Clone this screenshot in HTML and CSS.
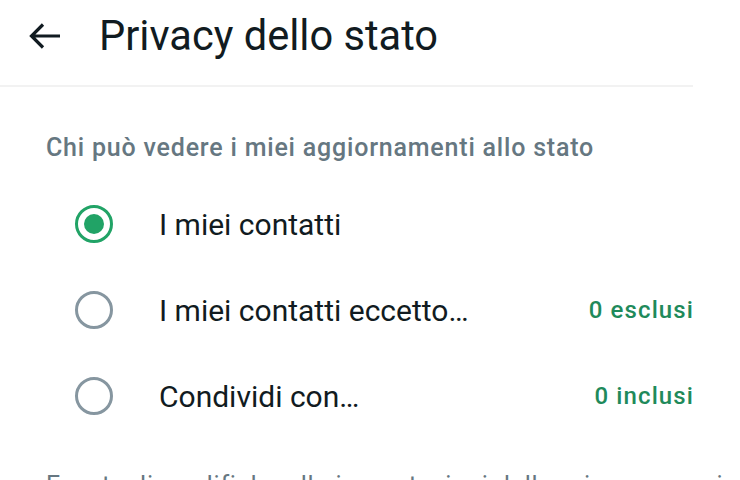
FILE: index.html
```html
<!DOCTYPE html>
<html lang="it">
<head>
<meta charset="utf-8">
<link rel="stylesheet" href="styles.css">
</head>
<body>
<div class="screen">
  <header class="appbar">
    <span class="back">
      <svg width="34" height="28" viewBox="0 0 34 28"><path d="M32 14H4M15 2.5L3.5 14L15 25.5" fill="none" stroke="#111b21" stroke-width="3.2" stroke-linecap="butt" stroke-linejoin="miter"/></svg>
    </span>
    <h1 class="title">Privacy dello stato</h1>
  </header>
  <div class="divider"></div>
  <section class="section">
    <h2 class="label">Chi può vedere i miei aggiornamenti allo stato</h2>
    <ul class="options">
      <li class="option">
        <span class="radio checked"><span class="dot"></span></span>
        <span class="text">I miei contatti</span>
      </li>
      <li class="option">
        <span class="radio"></span>
        <span class="text">I miei contatti eccetto…</span>
        <span class="count">0 esclusi</span>
      </li>
      <li class="option">
        <span class="radio"></span>
        <span class="text">Condividi con…</span>
        <span class="count">0 inclusi</span>
      </li>
    </ul>
    <p class="note">Eventuali modifiche alle impostazioni della privacy non si</p>
  </section>
</div>
</body>
</html>
```
FILE: styles.css
```css
* { box-sizing: border-box; }
html, body { margin: 0; padding: 0; background: #fff; }
body { font-family: Roboto, "Noto Sans", sans-serif; color: #111b21; overflow: hidden; height: 480px; }
.screen { width: 740px; height: 480px; overflow: hidden; }
.appbar { display: flex; align-items: center; height: 72px; padding-left: 28px; }
.back { display: flex; width: 34px; height: 28px; }
.title { margin: 0 0 0 37px; font-size: 41.6px; font-weight: 400; color: #111b21; line-height: 1; }
.divider { margin-top: 13px; width: 693px; height: 2px; background: #f2f2f2; }
.section { padding: 0 0 0 46px; overflow: hidden; }
.label { margin: 46px 0 0 0; font-size: 25px; font-weight: 500; letter-spacing: 0.8px; color: #667781; line-height: 30px; }
.options { list-style: none; margin: 18px 46px 0 0; padding: 0; }
.option { display: flex; align-items: center; height: 86px; }
.radio { width: 38px; height: 38px; border-radius: 50%; border: 3px solid #8696a0; margin-left: 29px; display: flex; align-items: center; justify-content: center; flex: none; }
.radio.checked { border-color: #21a366; }
.dot { width: 20px; height: 20px; border-radius: 50%; background: #21a366; }
.text { margin-left: 46px; font-size: 30px; color: #111b21; flex: 1; }
.count { font-size: 24px; font-weight: 500; letter-spacing: 1.1px; color: #1f8a5b; }
.note { margin: 32px 0 0 0; font-size: 25px; letter-spacing: 0.8px; color: #667781; white-space: nowrap; overflow: hidden; line-height: 30px; }
```
